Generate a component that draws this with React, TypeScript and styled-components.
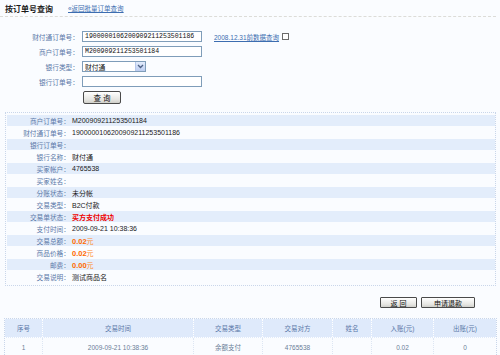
import styled, { createGlobalStyle } from "styled-components";

const GlobalStyle = createGlobalStyle`
  html, body {
    margin: 0;
    padding: 0;
    background: #fafcff;
  }
  body {
    font-family: "Liberation Sans", "Noto Sans CJK SC", sans-serif;
    font-size: 7px;
    color: #222;
  }
`;

const detailRows: { label: string; value: string; kind?: "red" | "money" }[] = [
  { label: "商户订单号：", value: "M200909211253501184" },
  { label: "财付通订单号：", value: "1900000106200909211253501186" },
  { label: "银行订单号：", value: "" },
  { label: "银行名称：", value: "财付通" },
  { label: "买家帐户：", value: "4765538" },
  { label: "买家姓名：", value: "" },
  { label: "分账状态：", value: "未分帐" },
  { label: "交易类型：", value: "B2C付款" },
  { label: "交易单状态：", value: "买方支付成功", kind: "red" },
  { label: "支付时间：", value: "2009-09-21 10:38:36" },
  { label: "交易总额：", value: "0.02", kind: "money" },
  { label: "商品价格：", value: "0.02", kind: "money" },
  { label: "邮费：", value: "0.00", kind: "money" },
  { label: "交易说明：", value: "测试商品名" },
];

const columns = [
  { title: "序号", width: 38 },
  { title: "交易时间", width: 151 },
  { title: "交易类型", width: 69 },
  { title: "交易对方", width: 70 },
  { title: "姓名", width: 39 },
  { title: "入账(元)", width: 62 },
  { title: "出账(元)", width: 62 },
];

const record = ["1", "2009-09-21 10:38:36", "余额支付", "4765538", "", "0.02", "0"];

export default function App() {
  return (
    <Page>
      <GlobalStyle />
      <TopBar>
        <Title>按订单号查询</Title>
        <BackLink href="#">«返回批量订单查询</BackLink>
      </TopBar>

      <SearchForm>
        <FieldLabel>财付通订单号：</FieldLabel>
        <FieldLine>
          <TextInput defaultValue="1900000106200909211253501186" />
          <OldDataLink href="#">2008.12.31前数据查询</OldDataLink>
          <Check />
        </FieldLine>
        <FieldLabel>商户订单号：</FieldLabel>
        <FieldLine>
          <TextInput defaultValue="M200909211253501184" />
        </FieldLine>
        <FieldLabel>银行类型：</FieldLabel>
        <FieldLine>
          <FakeSelect>
            <span>财付通</span>
            <SelectArrow>
              <svg width="7" height="5" viewBox="0 0 7 5">
                <path d="M1 1 L3.5 3.5 L6 1" stroke="#4d6185" strokeWidth="1.3" fill="none" />
              </svg>
            </SelectArrow>
          </FakeSelect>
        </FieldLine>
        <FieldLabel>银行订单号：</FieldLabel>
        <FieldLine>
          <TextInput defaultValue="" />
        </FieldLine>
        <span />
        <FieldLine>
          <QueryButton>查 询</QueryButton>
        </FieldLine>
      </SearchForm>

      <DetailBox>
        {detailRows.map((r, i) => (
          <DetailRow key={i} $shaded={i % 2 === 0}>
            <DetailLabel>{r.label}</DetailLabel>
            <DetailValue>
              {r.kind === "red" && <RedText>{r.value}</RedText>}
              {r.kind === "money" && (
                <>
                  <Money>{r.value}</Money>
                  <Yuan>元</Yuan>
                </>
              )}
              {!r.kind && r.value}
            </DetailValue>
          </DetailRow>
        ))}
      </DetailBox>

      <Actions>
        <ActionButton $w={37}>返 回</ActionButton>
        <ActionButton $w={54}>申请退款</ActionButton>
      </Actions>

      <RecordTable>
        <RecordRow $head>
          {columns.map((c, i) => (
            <RecordCell key={i} $w={c.width} $head>
              {c.title}
            </RecordCell>
          ))}
        </RecordRow>
        <RecordRow>
          {record.map((v, i) => (
            <RecordCell key={i} $w={columns[i].width}>
              {v}
            </RecordCell>
          ))}
        </RecordRow>
      </RecordTable>
    </Page>
  );
}

const Page = styled.div`
  width: 500px;
  height: 355px;
  overflow: hidden;
  background: #fafcff;
`;

const TopBar = styled.div`
  display: flex;
  align-items: center;
  gap: 15px;
  height: 16px;
  padding: 0 5px;
  margin-right: 4px;
  border-bottom: 1px dashed #dcdcd8;
`;

const Title = styled.div`
  font-size: 8px;
  font-weight: bold;
  color: #1a1a1a;
`;

const BackLink = styled.a`
  font-size: 6.5px;
  color: #3c6db0;
  text-decoration: underline;
`;

const SearchForm = styled.div`
  display: grid;
  grid-template-columns: 80px 1fr;
  grid-auto-rows: 11px;
  row-gap: 4px;
  align-items: center;
  padding-top: 14px;
  & > :last-child {
    height: 13px;
  }
`;

const FieldLabel = styled.div`
  text-align: right;
  padding-right: 1px;
  color: #5b78a8;
  font-size: 6.7px;
  white-space: nowrap;
`;

const FieldLine = styled.div`
  display: flex;
  align-items: center;
  height: 11px;
  padding-left: 2px;
`;

const TextInput = styled.input`
  box-sizing: border-box;
  width: 120px;
  height: 11px;
  padding: 0 2px;
  margin: 0;
  border: 1px solid #7f9db9;
  background: #fff;
  font-family: "Liberation Mono", monospace;
  font-size: 6.5px;
  color: #111;
  outline: none;
`;

const OldDataLink = styled.a`
  margin-left: 12px;
  font-size: 6.5px;
  color: #3c6db0;
  text-decoration: underline;
`;

const Check = styled.span`
  box-sizing: border-box;
  width: 7px;
  height: 7px;
  margin-left: 3px;
  border: 1px solid #6b6b6b;
  background: #fff;
`;

const FakeSelect = styled.div`
  box-sizing: border-box;
  display: flex;
  align-items: center;
  justify-content: space-between;
  width: 64px;
  height: 11px;
  border: 1px solid #7f9db9;
  background: #fff;
  padding-left: 2px;
  font-size: 6.8px;
  color: #111;
`;

const SelectArrow = styled.span`
  display: flex;
  align-items: center;
  justify-content: center;
  width: 9px;
  height: 9px;
  background: linear-gradient(#e3ecfc, #bccdf0);
  border-left: 1px solid #b7c8ea;
`;

const QueryButton = styled.button`
  box-sizing: border-box;
  width: 38px;
  height: 13px;
  margin: 2px 0 0 1px;
  padding: 0;
  border: 1px solid #4a4a4a;
  border-radius: 2px;
  background: linear-gradient(#ffffff, #e4e4e0 70%, #cfcfca);
  font-family: "Liberation Sans", "Noto Sans CJK SC", sans-serif;
  font-size: 7.5px;
  color: #111;
`;

const DetailBox = styled.div`
  margin: 10px 4px 0 5px;
  padding: 2px 0 2px 1px;
  border: 1px dotted #c9d6ea;
`;

const DetailRow = styled.div<{ $shaded?: boolean }>`
  display: flex;
  align-items: center;
  height: 11px;
  margin-bottom: 1px;
  background: ${(p) => (p.$shaded ? "#e3edfb" : "transparent")};
`;

const DetailLabel = styled.div`
  width: 63px;
  text-align: right;
  color: #5b78a8;
  font-size: 6.7px;
  white-space: nowrap;
`;

const DetailValue = styled.div`
  padding-left: 2px;
  font-size: 7px;
  color: #1a1a1a;
`;

const RedText = styled.span`
  color: #ee0000;
  font-weight: bold;
`;

const Money = styled.span`
  color: #ff6a00;
  font-weight: bold;
  font-size: 7.5px;
`;

const Yuan = styled.span`
  color: #ff8a30;
`;

const Actions = styled.div`
  display: flex;
  justify-content: flex-end;
  gap: 4px;
  padding: 11px 25px 0 0;
  height: 12px;
`;

const ActionButton = styled.button<{ $w: number }>`
  box-sizing: border-box;
  width: ${(p) => p.$w}px;
  height: 11px;
  padding: 0;
  border: 1px solid #4a4a4a;
  border-radius: 1px;
  background: linear-gradient(#ffffff, #e6e6e2 70%, #d0d0cb);
  font-family: "Liberation Sans", "Noto Sans CJK SC", sans-serif;
  font-size: 7px;
  color: #111;
`;

const RecordTable = styled.div`
  margin: 9px 0 0 4px;
  width: 491px;
  border: 1px dotted #c9d6ea;
`;

const RecordRow = styled.div<{ $head?: boolean }>`
  display: flex;
  height: 18px;
  background: ${(p) => (p.$head ? "#dfeafb" : "transparent")};
  border-bottom: ${(p) => (p.$head ? "1px dotted #ffffff" : "none")};
`;

const RecordCell = styled.div<{ $w: number; $head?: boolean }>`
  box-sizing: border-box;
  width: ${(p) => p.$w}px;
  display: flex;
  align-items: center;
  justify-content: center;
  font-size: 6.5px;
  color: ${(p) => (p.$head ? "#5b78a8" : "#6a7c98")};
  border-right: 1px dotted ${(p) => (p.$head ? "#ffffff" : "#dde6f3")};
  &:last-child {
    border-right: none;
  }
`;
